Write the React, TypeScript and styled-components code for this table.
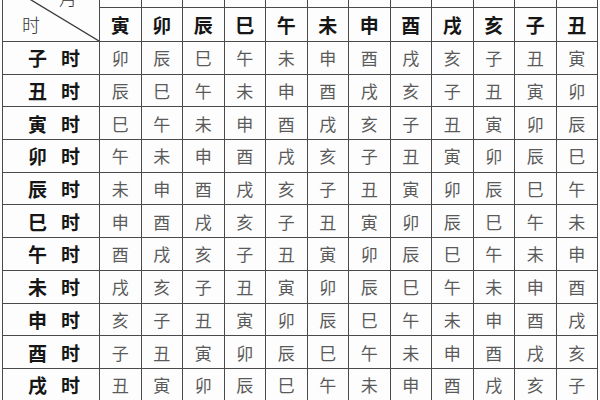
import React from "react";
import styled, { createGlobalStyle } from "styled-components";

const GlobalStyle = createGlobalStyle`
  html, body {
    margin: 0;
    padding: 0;
    background: #ffffff;
  }
  body {
    font-family: "Noto Sans CJK SC", "Noto Sans", sans-serif;
  }
`;

const Page = styled.div`
  width: 600px;
  height: 400px;
  overflow: hidden;
  background: #fdfdfd;
`;

const Grid = styled.table`
  margin: -18px 0 0 2px;
  width: 596px;
  table-layout: fixed;
  border-collapse: collapse;
  color: #222;
`;

const Cell = styled.td<{ $kind?: "head" | "label" | "value" }>`
  border: 1.5px solid #4a4a4a;
  padding: 0;
  text-align: center;
  vertical-align: middle;
  height: 31.7px;
  font-size: ${(p) => (p.$kind === "value" ? "17px" : "19px")};
  font-weight: ${(p) => (p.$kind === "value" ? 400 : 700)};
  color: ${(p) => (p.$kind === "value" ? "#5a5a5a" : "#161616")};
  letter-spacing: ${(p) => (p.$kind === "label" ? "14px" : "0")};
  text-indent: ${(p) => (p.$kind === "label" ? "20px" : "0")};
  line-height: 1;
`;

const TopCell = styled.td`
  border: 1.5px solid #4a4a4a;
  height: 24px;
  padding: 0;
`;

const HeadRow = styled.tr`
  height: 34px;
`;

const Corner = styled.td`
  position: relative;
  border: 1.5px solid #4a4a4a;
  padding: 0;
`;

const Diagonal = styled.svg`
  position: absolute;
  inset: 0;
  width: 100%;
  height: 100%;
`;

const CornerMark = styled.span<{ $top?: boolean }>`
  position: absolute;
  font-size: 18px;
  font-weight: 300;
  color: #333;
  line-height: 1;
  ${(p) => (p.$top ? "top: 5px; right: 22px;" : "bottom: 8px; left: 19px;")}
`;

const branches = "子丑寅卯辰巳午未申酉戌亥".split("");
const months = "寅卯辰巳午未申酉戌亥子丑".split("");

export default function App() {
  return (
    <Page>
      <GlobalStyle />
      <Grid>
        <colgroup>
          <col style={{ width: 97 }} />
          {months.map((m) => (
            <col key={m} />
          ))}
        </colgroup>
        <tbody>
          <tr>
            <Corner rowSpan={2}>
              <Diagonal viewBox="0 0 100 100" preserveAspectRatio="none">
                <line x1="0" y1="0" x2="100" y2="100" stroke="#3a3a3a" strokeWidth="1.3" vectorEffect="non-scaling-stroke" />
              </Diagonal>
              <CornerMark $top>月</CornerMark>
              <CornerMark>时</CornerMark>
            </Corner>
            {months.map((m) => (
              <TopCell key={m} />
            ))}
          </tr>
          <HeadRow>
            {months.map((m) => (
              <Cell key={m} $kind="head">
                {m}
              </Cell>
            ))}
          </HeadRow>
          {branches.map((b, i) => (
            <tr key={b}>
              <Cell $kind="label">{b}时</Cell>
              {months.map((m, j) => (
                <Cell key={m} $kind="value">
                  {branches[(i + j + 3) % 12]}
                </Cell>
              ))}
            </tr>
          ))}
        </tbody>
      </Grid>
    </Page>
  );
}
